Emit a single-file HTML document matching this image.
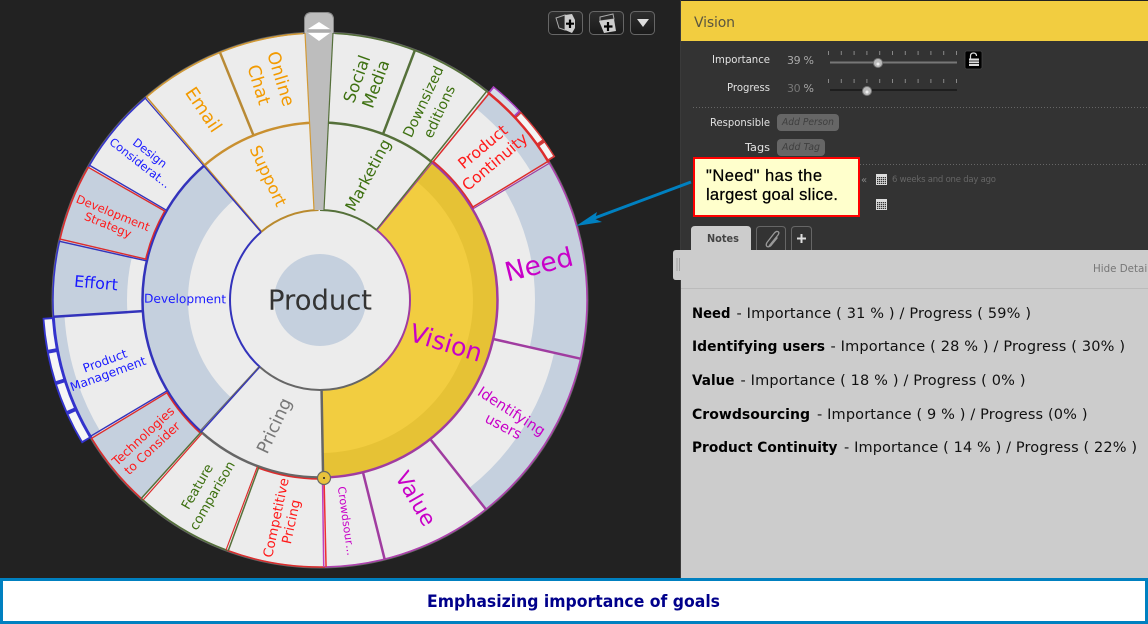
<!DOCTYPE html>
<html><head><meta charset="utf-8"><style>
html,body{margin:0;padding:0;background:#222;width:1148px;height:624px;overflow:hidden}
svg{display:block}
text{font-family:"DejaVu Sans",sans-serif}
.l text{dominant-baseline:central;text-anchor:middle}
.a circle{fill:none}
.n{font-size:14.5px;fill:#111}
.b{font-size:13.8px;font-weight:bold;fill:#000}
.lbl{font-size:11px;fill:#e2e2e2;text-anchor:end}
.c{font-family:"Liberation Sans",sans-serif;font-size:16.5px;fill:#000;stroke:#000;stroke-width:.25px}
</style></head><body>
<svg width="1148" height="624" viewBox="0 0 1148 624" xmlns="http://www.w3.org/2000/svg">
<rect width="1148" height="624" fill="#222"/>

<!-- wheel -->
<circle cx="320" cy="300" r="267.5" fill="#ececec" stroke="#666" stroke-width="2"/>
<g class="a" transform="translate(320,300) rotate(-90)">
<!-- progress bands -->
<circle r="241" stroke="#c5d0de" stroke-width="52" pathLength="360" stroke-dasharray="43.7 360" stroke-dashoffset="-59"/>
<circle r="253.5" stroke="#c5d0de" stroke-width="27" pathLength="360" stroke-dasharray="38.9 360" stroke-dashoffset="-102.7"/>
<circle r="257" stroke="#c5d0de" stroke-width="20" pathLength="360" stroke-dasharray="20 360" stroke-dashoffset="-39"/>
<circle r="230" stroke="#c5d0de" stroke-width="74" pathLength="360" stroke-dasharray="16.6 360" stroke-dashoffset="-266.4"/>
<circle r="261.5" stroke="#c5d0de" stroke-width="11" pathLength="360" stroke-dasharray="27.4 360" stroke-dashoffset="-239"/>
<circle r="222.5" stroke="#c5d0de" stroke-width="89" pathLength="360" stroke-dasharray="17 360" stroke-dashoffset="-222"/>
<circle r="222.5" stroke="#c5d0de" stroke-width="89" pathLength="360" stroke-dasharray="17 360" stroke-dashoffset="-283"/>
<circle r="155" stroke="#c5d0de" stroke-width="46" pathLength="360" stroke-dasharray="97.5 360" stroke-dashoffset="-222"/>
<circle r="134" stroke="#f2cd40" stroke-width="88" pathLength="360" stroke-dasharray="140 360" stroke-dashoffset="-39"/>
<circle r="165.5" stroke="#e6c235" stroke-width="25" pathLength="360" stroke-dasharray="140 360" stroke-dashoffset="-39"/>

<!-- tabs top right -->
<circle r="271" stroke="#a840c0" stroke-width="9" pathLength="360" stroke-dasharray="7.8 360" stroke-dashoffset="-39"/>
<circle r="271" stroke="#d5dde8" stroke-width="6" pathLength="360" stroke-dasharray="7 360" stroke-dashoffset="-39.4"/>
<circle r="271" stroke="#d63a3a" stroke-width="9" pathLength="360" stroke-dasharray="7.8 360" stroke-dashoffset="-46.8"/>
<circle r="271" stroke="#f4f4f4" stroke-width="6" pathLength="360" stroke-dasharray="7 360" stroke-dashoffset="-47.2"/>
<circle r="271" stroke="#d63a3a" stroke-width="9" pathLength="360" stroke-dasharray="4.1 360" stroke-dashoffset="-54.6"/>
<circle r="271" stroke="#f4f4f4" stroke-width="6" pathLength="360" stroke-dasharray="3.3 360" stroke-dashoffset="-55"/>
<!-- tabs left -->
<circle r="272.5" stroke="#3333cc" stroke-width="11" pathLength="360" stroke-dasharray="27.4 360" stroke-dashoffset="-239"/>
<circle r="272.5" stroke="#f6f6f6" stroke-width="7.5" pathLength="360" stroke-dasharray="6.2 360" stroke-dashoffset="-239.4"/>
<circle r="272.5" stroke="#f6f6f6" stroke-width="7.5" pathLength="360" stroke-dasharray="5.8 360" stroke-dashoffset="-246.4"/>
<circle r="272.5" stroke="#f6f6f6" stroke-width="7.5" pathLength="360" stroke-dasharray="5.9 360" stroke-dashoffset="-253"/>
<circle r="272.5" stroke="#f6f6f6" stroke-width="7.5" pathLength="360" stroke-dasharray="6.3 360" stroke-dashoffset="-259.7"/>

<!-- outer thin arcs -->
<g stroke-width="1.5">
<circle r="267" stroke="#b040b0" pathLength="360" stroke-dasharray="120 360" stroke-dashoffset="-59"/>
<circle r="267" stroke="#dd2c2c" pathLength="360" stroke-dasharray="21.4 360" stroke-dashoffset="-179"/>
<circle r="267" stroke="#55703a" pathLength="360" stroke-dasharray="21.6 360" stroke-dashoffset="-200.4"/>
<circle r="267" stroke="#dd2c2c" pathLength="360" stroke-dasharray="17 360" stroke-dashoffset="-222"/>
<circle r="267" stroke="#3333cc" stroke-width="2.5" pathLength="360" stroke-dasharray="27.4 360" stroke-dashoffset="-239"/>
<circle r="267" stroke="#3333cc" pathLength="360" stroke-dasharray="16.6 360" stroke-dashoffset="-266.4"/>
<circle r="267" stroke="#dd2c2c" pathLength="360" stroke-dasharray="17 360" stroke-dashoffset="-283"/>
<circle r="267" stroke="#3333cc" pathLength="360" stroke-dasharray="19.5 360" stroke-dashoffset="-300"/>
<circle r="267" stroke="#d39a35" pathLength="360" stroke-dasharray="37 360" stroke-dashoffset="-319.5"/>
<circle r="267" stroke="#55703a" pathLength="360" stroke-dasharray="35.8 360" stroke-dashoffset="-3.2"/>
<circle r="267" stroke="#dd2c2c" stroke-width="2.5" pathLength="360" stroke-dasharray="20 360" stroke-dashoffset="-39"/>
</g>

<!-- r=178 arcs -->
<g stroke-width="2.5">
<circle r="177.5" stroke="#a03ca0" pathLength="360" stroke-dasharray="140 360" stroke-dashoffset="-39"/>
<circle r="177.5" stroke="#666" pathLength="360" stroke-dasharray="43 360" stroke-dashoffset="-179"/>
<circle r="177.5" stroke="#3333bb" pathLength="360" stroke-dasharray="97.5 360" stroke-dashoffset="-222"/>
<circle r="177.5" stroke="#c99030" pathLength="360" stroke-dasharray="40 360" stroke-dashoffset="-319.5"/>
<circle r="177.5" stroke="#55703a" pathLength="360" stroke-dasharray="39 360" stroke-dashoffset="0"/>
</g>
<g stroke="#dd2c2c" stroke-width="1.5">
<circle r="179" pathLength="360" stroke-dasharray="20 360" stroke-dashoffset="-39"/>
<circle r="179" pathLength="360" stroke-dasharray="21.4 360" stroke-dashoffset="-179"/>
<circle r="179" pathLength="360" stroke-dasharray="17 360" stroke-dashoffset="-222"/>
<circle r="179" pathLength="360" stroke-dasharray="17 360" stroke-dashoffset="-283"/>
</g>

<!-- centre -->
<circle r="90" style="fill:#ececec"/>
<circle r="46" style="fill:#c5d0de"/>
<g stroke-width="2">
<circle r="90" stroke="#a03ca0" pathLength="360" stroke-dasharray="100 360" stroke-dashoffset="-39"/>
<circle r="90" stroke="#666" pathLength="360" stroke-dasharray="83 360" stroke-dashoffset="-139"/>
<circle r="90" stroke="#3333bb" pathLength="360" stroke-dasharray="97.5 360" stroke-dashoffset="-222"/>
<circle r="90" stroke="#b98a2e" pathLength="360" stroke-dasharray="40 360" stroke-dashoffset="-319.5"/>
<circle r="90" stroke="#55703a" pathLength="360" stroke-dasharray="39 360" stroke-dashoffset="0"/>
</g>

<!-- radial lines -->
<g stroke-width="2.5">
<line x1="178" x2="267" transform="rotate(338)" stroke="#b98a35"/>
<line x1="178" x2="267" transform="rotate(20.8)" stroke="#55703a"/>
<line x1="178" x2="267" transform="rotate(38.6)" stroke="#55703a" stroke-width="1.5"/>
<line x1="178" x2="267" transform="rotate(39.3)" stroke="#dd2c2c" stroke-width="1.5"/>
<line x1="90" x2="178" transform="rotate(38.8)" stroke="#55703a" stroke-width="1.5"/>
<line x1="90" x2="178" transform="rotate(39.3)" stroke="#a03ca0" stroke-width="1"/>
<line x1="178" x2="267" transform="rotate(58.7)" stroke="#dd2c2c" stroke-width="1.5"/>
<line x1="178" x2="267" transform="rotate(59.2)" stroke="#a03ca0" stroke-width="1.2"/>
<line x1="178" x2="267" transform="rotate(102.7)" stroke="#a03ca0"/>
<line x1="178" x2="267" transform="rotate(141.6)" stroke="#a03ca0"/>
<line x1="178" x2="267" transform="rotate(166)" stroke="#a03ca0"/>
<line x1="178" x2="267" transform="rotate(178.7)" stroke="#ee3030" stroke-width="1.5"/>
<line x1="178" x2="267" transform="rotate(179.2)" stroke="#c040c0" stroke-width="1.5"/>
<line x1="90" x2="178" transform="rotate(179)" stroke="#666"/>
<line x1="178" x2="267" transform="rotate(200.1)" stroke="#55703a" stroke-width="1.5"/>
<line x1="178" x2="267" transform="rotate(200.6)" stroke="#dd2c2c" stroke-width="1.2"/>
<line x1="178" x2="267" transform="rotate(222)" stroke="#55703a" stroke-width="1.5"/>
<line x1="178" x2="267" transform="rotate(221.5)" stroke="#dd2c2c" stroke-width="1.2"/>
<line x1="90" x2="178" transform="rotate(222)" stroke="#3333bb" stroke-width="1.5"/>
<line x1="90" x2="178" transform="rotate(222.5)" stroke="#666" stroke-width="1"/>
<line x1="178" x2="267" transform="rotate(238.8)" stroke="#dd2c2c" stroke-width="1.4"/>
<line x1="178" x2="267" transform="rotate(239.3)" stroke="#3333bb" stroke-width="1.4"/>
<line x1="178" x2="267" transform="rotate(266.4)" stroke="#3333bb"/>
<line x1="178" x2="267" transform="rotate(283.2)" stroke="#dd2c2c" stroke-width="1.4"/>
<line x1="178" x2="267" transform="rotate(282.7)" stroke="#3333bb" stroke-width="1.4"/>
<line x1="178" x2="267" transform="rotate(299.8)" stroke="#dd2c2c" stroke-width="1.4"/>
<line x1="178" x2="267" transform="rotate(300.3)" stroke="#3333bb" stroke-width="1.4"/>
<line x1="90" x2="267" transform="rotate(319.5)" stroke="#c99030" stroke-width="1.5"/>
<line x1="90" x2="178" transform="rotate(319.1)" stroke="#3333bb" stroke-width="1.5"/>
<line x1="178" x2="267" transform="rotate(319.1)" stroke="#3333bb" stroke-width="1.2"/>
</g>
</g>

<!-- needle -->
<path d="M304 20 L314 210 H324 L334 20 Q334 12 326 12 H312 Q304 12 304 20 Z" fill="#bdbdbd"/>
<path d="M305 33 L314 210" stroke="#d39a35" stroke-width="1.2"/>
<path d="M333 33 L324 210" stroke="#55703a" stroke-width="1.2"/>
<path d="M304.5 33 V20 Q304.5 12.500 312 12.500 H326 Q333.5 12.500 333.5 20 V33" fill="none" stroke="#888"/>
<path d="M319 22 L330 29 H308 Z M308 33 H330 L319 41 Z" fill="#fff"/>
<line x1="307" x2="331" y1="31" y2="31" stroke="#999" stroke-width="1"/>
<circle cx="324" cy="478" r="6.5" fill="#e8c23c" stroke="#666" stroke-width="1.2"/>
<circle cx="324" cy="478" r="1" fill="#222"/>

<!-- wheel labels -->
<g class="l">
<text x="320" y="301" font-size="27.4" fill="#333">Product</text>
<g fill="#f29a00">
<text transform="translate(280,79) rotate(73)" font-size="17.5">Online</text>
<text transform="translate(258,85) rotate(73)" font-size="17.5">Chat</text>
<text transform="translate(203,110) rotate(56)" font-size="18">Email</text>
<text transform="translate(268,176) rotate(65)" font-size="16.5">Support</text>
</g>
<g fill="#1a1aff">
<text transform="translate(150,153) rotate(38)" font-size="11.5">Design</text>
<text transform="translate(140,163) rotate(38)" font-size="11.5">Considerat…</text>
<text transform="translate(96,283) rotate(5)" font-size="16">Effort</text>
<text transform="translate(185,299) rotate(.5)" font-size="12.2">Development</text>
<text transform="translate(105,361) rotate(-20)" font-size="12.1">Product</text>
<text transform="translate(108,374) rotate(-20)" font-size="12.1">Management</text>
</g>
<g fill="#ff1a1a">
<text transform="translate(113,213) rotate(22)" font-size="11.6">Development</text>
<text transform="translate(108,225) rotate(22)" font-size="11.6">Strategy</text>
<text transform="translate(143,436) rotate(-43)" font-size="12.4">Technologies</text>
<text transform="translate(152,448) rotate(-43)" font-size="12.4">to Consider</text>
<text transform="translate(277,518) rotate(-78)" font-size="13.3">Competitive</text>
<text transform="translate(292,522) rotate(-78)" font-size="13.3">Pricing</text>
<text transform="translate(483,147) rotate(-40)" font-size="15.5">Product</text>
<text transform="translate(495,162) rotate(-40)" font-size="15.5">Continuity</text>
</g>
<g fill="#3d7010">
<text transform="translate(198,487) rotate(-60)" font-size="13.2">Feature</text>
<text transform="translate(213,496) rotate(-60)" font-size="13.2">comparison</text>
<text transform="translate(424,102) rotate(-65)" font-size="14.2">Downsized</text>
<text transform="translate(440,112) rotate(-65)" font-size="14.2">editions</text>
<text transform="translate(357,79) rotate(-70)" font-size="16.6">Social</text>
<text transform="translate(376,84) rotate(-70)" font-size="16.6">Media</text>
<text transform="translate(368,175) rotate(-62)" font-size="15.8">Marketing</text>
</g>
<text transform="translate(275,426) rotate(-65)" font-size="17.5" fill="#777">Pricing</text>
<g fill="#c800c8">
<text transform="translate(346,521) rotate(82)" font-size="11">Crowdsour…</text>
<text transform="translate(415,499) rotate(60)" font-size="21.5">Value</text>
<text transform="translate(511,412) rotate(33)" font-size="14.5">Identifying</text>
<text transform="translate(503,427) rotate(28)" font-size="14.5">users</text>
<text transform="translate(446,343) rotate(17)" font-size="25">Vision</text>
<text transform="translate(539,265) rotate(-14)" font-size="26.5">Need</text>
</g>
</g>

<!-- top buttons -->
<defs><linearGradient id="g" x1="0" y1="0" x2="0" y2="1"><stop offset="0" stop-color="#2e2e2e"/><stop offset="1" stop-color="#1a1a1a"/></linearGradient></defs>
<rect x="548.5" y="11.5" width="34" height="23" rx="4" fill="url(#g)" stroke="#666"/>
<path d="M556 18 L565 15 V30 L559 28 Z" fill="#2a2a2a" stroke="#aaa"/>
<path d="M565 15 L572 14 L575 20 V28 L572 33 L565 30 Z" fill="#ccc"/>
<path d="M570 19.5 V28 M566 23.7 H574" stroke="#000" stroke-width="2.2"/>
<rect x="589.5" y="11.5" width="34" height="23" rx="4" fill="url(#g)" stroke="#666"/>
<path d="M600 17 L613 14 L614 19 L600 21 Z" fill="#2a2a2a" stroke="#aaa"/>
<path d="M599 21 L614 19 L616 31 L604 33 Z" fill="#ccc"/>
<path d="M608 22 V31 M604 26.5 H612.5" stroke="#000" stroke-width="2.2"/>
<rect x="630.5" y="11.5" width="24" height="23" rx="4" fill="url(#g)" stroke="#666"/>
<path d="M637 19 H649 L643 27 Z" fill="#ddd"/>

<!-- panel -->
<rect x="681" y="1" width="467" height="577" fill="#333"/>
<rect x="680" y="0" width="1" height="578" fill="#3a3a3a"/>
<rect x="681" y="1" width="467" height="40" fill="#f2cd40"/>
<text x="694" y="27" font-size="14" fill="#5a5540" textLength="41">Vision</text>

<text class="lbl" x="770" y="63" textLength="58" lengthAdjust="spacingAndGlyphs">Importance</text>
<text x="787" y="64" font-size="11" fill="#aaa" textLength="27">39 %</text>
<line x1="828" x2="957" y1="53" y2="53" stroke="#888" stroke-width="4" stroke-dasharray="1 11.8"/>
<line x1="830" x2="957" y1="62.5" y2="62.5" stroke="#777" stroke-width="2"/>
<circle cx="878" cy="63" r="4.5" fill="#bbb" stroke="#777"/>
<circle cx="878" cy="64" r="1.5" fill="#eee"/>
<rect x="965" y="51" width="17" height="18" rx="2" fill="#000" stroke="#444" stroke-width=".8"/>
<path d="M970.5 58.5 V56 Q970.5 53 973.5 53 Q976.5 53 976.5 56" fill="none" stroke="#ddd" stroke-width="1.2"/>
<rect x="969" y="58.5" width="10" height="7.5" fill="#ddd"/>
<path d="M969 61 H979 M969 63.5 H979" stroke="#000" stroke-width=".8"/>

<text class="lbl" x="770" y="91" textLength="43" lengthAdjust="spacingAndGlyphs">Progress</text>
<text x="787" y="92" font-size="11" fill="#777" textLength="27">30 <tspan fill="#aaa">%</tspan></text>
<line x1="828" x2="957" y1="81" y2="81" stroke="#888" stroke-width="4" stroke-dasharray="1 11.8"/>
<line x1="830" x2="957" y1="90" y2="90" stroke="#1e1e1e" stroke-width="2"/>
<circle cx="867" cy="91" r="4.5" fill="#bbb" stroke="#777"/>
<circle cx="867" cy="92" r="1.5" fill="#eee"/>

<line x1="693" x2="1148" y1="107.5" y2="107.5" stroke="#666" stroke-dasharray="1 2"/>
<text class="lbl" x="770" y="126" textLength="60" lengthAdjust="spacingAndGlyphs">Responsible</text>
<rect x="777" y="114" width="62" height="17" rx="4" fill="#666"/>
<text x="782" y="125" font-size="10" font-style="italic" fill="#3f3f3f" textLength="52" lengthAdjust="spacingAndGlyphs">Add Person</text>
<text class="lbl" x="770" y="151" textLength="25" lengthAdjust="spacingAndGlyphs">Tags</text>
<rect x="777" y="139" width="48" height="17" rx="4" fill="#666"/>
<text x="782" y="150" font-size="10" font-style="italic" fill="#3f3f3f" textLength="38" lengthAdjust="spacingAndGlyphs">Add Tag</text>
<line x1="860" x2="1148" y1="164.5" y2="164.5" stroke="#666" stroke-dasharray="1 2"/>

<text x="861" y="183" font-size="10" fill="#888">«</text>
<rect x="876.5" y="174.5" width="10" height="10" fill="#333" stroke="#ddd" stroke-width="1"/>
<path d="M877 176 H886" stroke="#ddd" stroke-width="2"/>
<path d="M877 178.5 H886 M877 180.5 H886 M877 182.5 H886 M878.500 177 V184 M880.500 177 V184 M882.500 177 V184 M884.500 177 V184" stroke="#ddd" stroke-width=".7"/>
<rect x="876.5" y="199.5" width="10" height="10" fill="#333" stroke="#ddd" stroke-width="1"/>
<path d="M877 201 H886" stroke="#ddd" stroke-width="2"/>
<path d="M877 203.5 H886 M877 205.5 H886 M877 207.5 H886 M878.500 202 V209 M880.500 202 V209 M882.500 202 V209 M884.500 202 V209" stroke="#ddd" stroke-width=".7"/>
<text x="892" y="182" font-size="8.5" fill="#666" textLength="104">6 weeks and one day ago</text>

<!-- tabs -->
<path d="M691 250 V230 Q691 226 695 226 H747 Q751 226 751 230 V250 Z" fill="#ccc"/>
<text x="707" y="242" font-size="11" font-weight="bold" fill="#444" textLength="32" lengthAdjust="spacingAndGlyphs">Notes</text>
<path d="M756.5 250 V230 Q756.5 226.5 760 226.5 H782 Q785.5 226.5 785.5 230 V250" fill="none" stroke="#666"/>
<path d="M769 246 L778 235 Q780 232 777.5 231.5 Q776 231 774 233.5 L767 242.5 Q765.5 245 767 246.5 Q769 247.5 771 245.5 L777.5 237.5" fill="none" stroke="#999" stroke-width="1.3"/>
<path d="M791.5 250 V230 Q791.5 226.5 795 226.5 H808 Q811.5 226.5 811.5 230 V250" fill="none" stroke="#666"/>
<path d="M801.5 234 V243 M797 238.5 H806" stroke="#ddd" stroke-width="2"/>

<!-- callout -->
<rect x="694" y="158" width="165" height="58" fill="#ffffcc" stroke="#f00" stroke-width="2"/>
<text class="c" x="706" y="181" textLength="116">"Need" has the</text>
<text class="c" x="706" y="200" textLength="132">largest goal slice.</text>

<!-- arrow -->
<line x1="691" y1="182" x2="592" y2="219" stroke="#0080c0" stroke-width="3"/>
<path d="M576 226 L597 212 L595 219 L602 222 Z" fill="#0080c0"/>

<!-- notes pane -->
<rect x="681" y="250" width="467" height="328" fill="#ccc"/>
<path d="M681 250 H676 Q673 250 673 253 V277 Q673 280 676 280 H681 Z" fill="#ccc"/>
<path d="M677 258 V271 M679.5 258 V271" stroke="#999" stroke-width=".8"/>
<line x1="681" x2="1148" y1="288.5" y2="288.5" stroke="#bbb"/>
<text x="1093" y="272" font-size="10.3" fill="#777">Hide Details</text>

<text class="b" x="692" y="318" textLength="38.5" lengthAdjust="spacingAndGlyphs">Need</text>
<text class="n" x="736.5" y="318" textLength="294.5">- Importance ( 31 % ) / Progress ( 59% )</text>
<text class="b" x="692" y="351" textLength="133" lengthAdjust="spacingAndGlyphs">Identifying users</text>
<text class="n" x="830.5" y="351" textLength="294.5">- Importance ( 28 % ) / Progress ( 30% )</text>
<text class="b" x="692" y="385" textLength="42.5" lengthAdjust="spacingAndGlyphs">Value</text>
<text class="n" x="740.5" y="385" textLength="285">- Importance ( 18 % ) / Progress ( 0% )</text>
<text class="b" x="692" y="419" textLength="118" lengthAdjust="spacingAndGlyphs">Crowdsourcing</text>
<text class="n" x="817" y="419" textLength="270.5">- Importance ( 9 % ) / Progress (0% )</text>
<text class="b" x="692" y="452" textLength="145.5" lengthAdjust="spacingAndGlyphs">Product Continuity</text>
<text class="n" x="844" y="452" textLength="293">- Importance ( 14 % ) / Progress ( 22% )</text>

<!-- caption -->
<rect x="1.5" y="579.5" width="1145" height="43" fill="#fff" stroke="#0080c0" stroke-width="3"/>
<text x="427" y="607" font-size="17" font-weight="bold" fill="#00008b" textLength="293" lengthAdjust="spacingAndGlyphs">Emphasizing importance of goals</text>
</svg>
</body></html>
